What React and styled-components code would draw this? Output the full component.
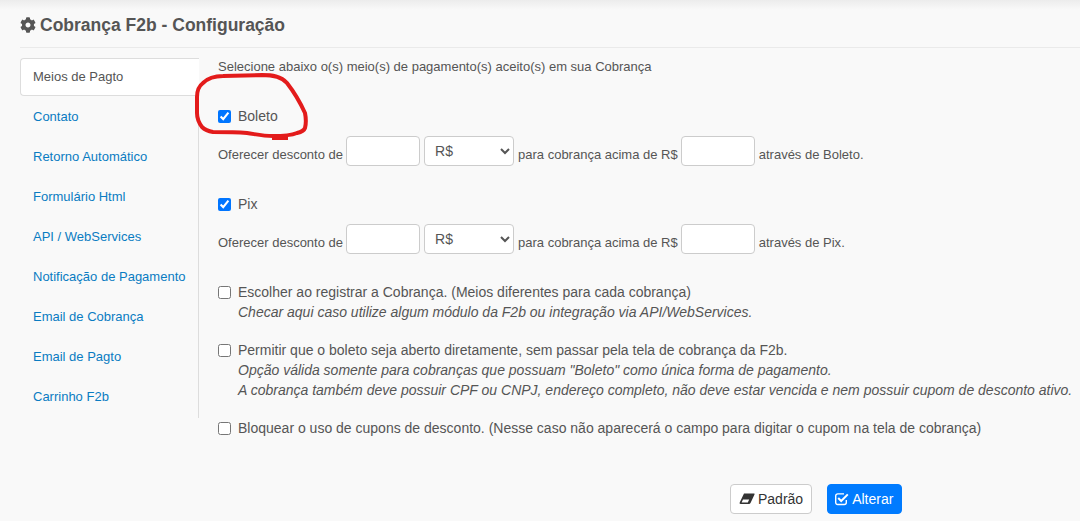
import styled, { createGlobalStyle } from "styled-components";
import { FaCog } from "react-icons/fa";

const GlobalStyle = createGlobalStyle`
  html, body {
    margin: 0;
    padding: 0;
    height: 100%;
    overflow: hidden;
    background: #f9f9f9;
  }
  * {
    box-sizing: border-box;
  }
`;

const Page = styled.div`
  position: relative;
  width: 1080px;
  height: 521px;
  overflow: hidden;
  padding: 11px 0 0 20px;
  background: linear-gradient(#ececec, #f9f9f9 10px);
  font-family: "Liberation Sans", Arial, sans-serif;
  font-size: 13px;
  line-height: 20px;
  color: #555;
`;

const Title = styled.h1`
  display: flex;
  align-items: center;
  gap: 4px;
  margin: 0;
  height: 37px;
  padding-bottom: 9px;
  border-bottom: 1px solid #eaeaea;
  font-size: 17.5px;
  font-weight: 700;
  color: #555;
`;

const Body = styled.div`
  display: flex;
  margin-top: 10px;
`;

const Tabs = styled.nav`
  width: 179px;
  height: 360px;
  flex-shrink: 0;
  border-right: 1px solid #ddd;
  display: flex;
  flex-direction: column;
`;

const Tab = styled.a`
  display: block;
  width: ${({ $active }) => ($active ? "179px" : "178px")};
  height: ${({ $active }) => ($active ? "38px" : "40px")};
  margin-bottom: ${({ $active }) => ($active ? "2px" : "0")};
  padding: ${({ $active }) => ($active ? "8px 12px" : "9px 13px")};
  color: ${({ $active }) => ($active ? "#555" : "#0a7cc2")};
  background: ${({ $active }) => ($active ? "#fff" : "transparent")};
  border: ${({ $active }) => ($active ? "1px solid #ddd" : "0")};
  border-right: 0;
  border-radius: 4px 0 0 4px;
  text-decoration: none;
  white-space: nowrap;
`;

const Content = styled.div`
  padding: 0 0 0 19px;
  flex: 1;
  min-width: 0;
`;

const Intro = styled.div`
  height: 20px;
  margin-top: -1px;
  margin-bottom: 29px;
`;

const Option = styled.label`
  display: flex;
  align-items: flex-start;
  height: 20px;
  gap: 7px;
  font-size: 14px;
  white-space: nowrap;
`;

const Check = styled.input.attrs({ type: "checkbox" })`
  width: 13px;
  height: 13px;
  margin: 4px 0 0;
  flex-shrink: 0;
`;

const Discount = styled.div`
  display: flex;
  align-items: flex-start;
  gap: 4px;
  height: 30px;
  margin-top: 10px;
  margin-bottom: 28px;
`;

const Words = styled.span`
  padding-top: 9px;
  white-space: nowrap;
  margin-right: ${({ $tight }) => ($tight ? "-1px" : "0")};
`;

const Field = styled.input`
  width: 74px;
  height: 30px;
  background: #fff;
  border: 1px solid #ccc;
  border-radius: 4px;
`;

const Currency = styled.select`
  width: 90px;
  height: 30px;
  padding-left: 6px;
  background: #fff;
  border: 1px solid #ccc;
  border-radius: 4px;
  font-family: inherit;
  font-size: 14px;
  color: #555;
`;

const Group = styled.div`
  margin-bottom: ${({ $gap }) => $gap}px;
`;

const Note = styled.div`
  padding-left: 20px;
  font-size: 14px;
  font-style: italic;
  white-space: nowrap;
`;

const Actions = styled.div`
  position: absolute;
  top: 484px;
  left: 730px;
  display: flex;
  gap: 15px;
`;

const Button = styled.button`
  display: flex;
  align-items: center;
  gap: 3px;
  height: 30px;
  padding: 0 8px 0 ${({ $primary }) => ($primary ? "7px" : "8px")};
  border-radius: 4px;
  font-family: inherit;
  font-size: 14px;
  color: ${({ $primary }) => ($primary ? "#fff" : "#333")};
  background: ${({ $primary }) => ($primary ? "#007bff" : "#fff")};
  border: 1px solid ${({ $primary }) => ($primary ? "#007bff" : "#ccc")};
`;

const Annotation = styled.svg`
  position: absolute;
  inset: 0;
  pointer-events: none;
`;

const EraserIcon = () => (
  <svg width="16" height="12" viewBox="0 0 16 12">
    <path
      fillRule="evenodd"
      fill="#333"
      d="M5 .5H15Q16 .5 15.5 1.5L11.5 10Q11 11 10 11H2Q0 11 .7 9.5ZM4 6.5 2.6 9.6H8.8L10.2 6.5Z"
    />
  </svg>
);

const CheckSquareIcon = () => (
  <svg width="14" height="14" viewBox="0 0 14 14" fill="none" stroke="#fff">
    <path
      strokeWidth="1.4"
      d="M11.3 8V10.5A2 2 0 0 1 9.3 12.5H2.7A2 2 0 0 1 .7 10.5V3.9A2 2 0 0 1 2.7 1.9H9"
    />
    <path strokeWidth="2" d="M3.2 6 6.2 9 12.8 2.4" />
  </svg>
);

const tabs = [
  "Meios de Pagto",
  "Contato",
  "Retorno Automático",
  "Formulário Html",
  "API / WebServices",
  "Notificação de Pagamento",
  "Email de Cobrança",
  "Email de Pagto",
  "Carrinho F2b",
];

const DiscountRow = ({ method }) => (
  <Discount>
    <Words $tight>Oferecer desconto de</Words>
    <Field />
    <Currency defaultValue="R$">
      <option>R$</option>
      <option>%</option>
    </Currency>
    <Words $tight>para cobrança acima de R$</Words>
    <Field />
    <Words>através de {method}.</Words>
  </Discount>
);

export default function App() {
  return (
    <Page>
      <GlobalStyle />
      <Title>
        <FaCog size={16} />
        Cobrança F2b - Configuração
      </Title>
      <Body>
        <Tabs>
          {tabs.map((t, i) => (
            <Tab key={t} href="#" $active={i === 0}>
              {t}
            </Tab>
          ))}
        </Tabs>
        <Content>
          <Intro>Selecione abaixo o(s) meio(s) de pagamento(s) aceito(s) em sua Cobrança</Intro>
          <Option>
            <Check defaultChecked />
            Boleto
          </Option>
          <DiscountRow method="Boleto" />
          <Option>
            <Check defaultChecked />
            Pix
          </Option>
          <DiscountRow method="Pix" />
          <Group $gap={18}>
            <Option>
              <Check />
              Escolher ao registrar a Cobrança. (Meios diferentes para cada cobrança)
            </Option>
            <Note>Checar aqui caso utilize algum módulo da F2b ou integração via API/WebServices.</Note>
          </Group>
          <Group $gap={18}>
            <Option>
              <Check />
              Permitir que o boleto seja aberto diretamente, sem passar pela tela de cobrança da F2b.
            </Option>
            <Note>Opção válida somente para cobranças que possuam "Boleto" como única forma de pagamento.</Note>
            <Note>A cobrança também deve possuir CPF ou CNPJ, endereço completo, não deve estar vencida e nem possuir cupom de desconto ativo.</Note>
          </Group>
          <Option>
            <Check />
            Bloquear o uso de cupons de desconto. (Nesse caso não aparecerá o campo para digitar o cupom na tela de cobrança)
          </Option>
        </Content>
      </Body>
      <Actions>
        <Button>
          <EraserIcon />
          Padrão
        </Button>
        <Button $primary>
          <CheckSquareIcon />
          Alterar
        </Button>
      </Actions>
      <Annotation width="1080" height="521" viewBox="0 0 1080 521">
        <path
          d="M197 97 C197 90 199 86 203 83 C208 78 216 76 223 76 L262 75 C272 75 281 76 287 83 C294 92 300 102 305 113 C306 118 306 124 305 128 C304 131 301 132 297 133 C292 135 285 136 273 136 C262 136 255 134 247 133 C235 132 224 132 213 132 C207 131 204 129 202 127 C199 123 197 118 197 113 Z"
          fill="none"
          stroke="#e31b1b"
          strokeWidth="4"
        />
        <path d="M272 137.5 H288" stroke="#e31b1b" strokeWidth="5" />
      </Annotation>
    </Page>
  );
}
